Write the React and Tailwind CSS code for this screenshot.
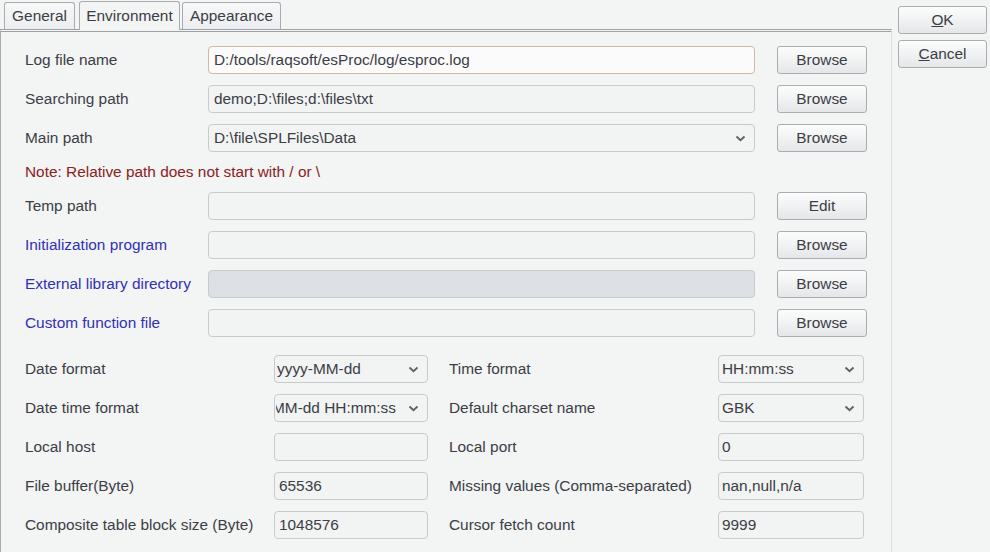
import React from 'react';

const font = { fontFamily: '"Liberation Sans", Arial, sans-serif' };

const Chevron = () => (
  <svg width="11" height="7" viewBox="0 0 11 7" className="shrink-0">
    <path d="M1.5 1.5 L5.5 5.2 L9.5 1.5" fill="none" stroke="#5c6068" strokeWidth="1.8" />
  </svg>
);

const Button = ({ children, className = '' }) => (
  <div className={`h-[28px] border border-[#a9adb2] rounded-[3px] bg-linear-to-b from-[#fcfcfc] via-[#f1f2f3] to-[#e4e6e8] flex items-center justify-center text-[15.4px] text-[#3b3e46] ${className}`}>
    {children}
  </div>
);

const Field = ({ value, width, select, tone = 'plain', pad = 'pl-[5px]', clipLeft }) => {
  const tones = {
    plain: 'bg-[#f2f3f3] border-[#c8cbce]',
    focus: 'bg-[#fbfbfb] border-[#d6b7a6]',
    dim: 'bg-[#dde0e4] border-[#c8cbce]',
  };
  return (
    <div className={`${width} h-[28px] border rounded-[4px] flex items-center ${pad} pr-[8px] text-[15.4px] text-[#3b3e46] ${tones[tone]}`}>
      <div className={`flex-1 overflow-hidden whitespace-nowrap flex ${select ? 'mr-[12px]' : ''} ${clipLeft ? 'justify-end' : ''}`}>
        <span className="shrink-0">{value}</span>
      </div>
      {select && <Chevron />}
    </div>
  );
};

const Row = ({ label, blue, children }) => (
  <div className="flex items-center h-[28px]">
    <div className={`w-[183px] text-[15.4px] whitespace-nowrap ${blue ? 'text-[#3131b4]' : 'text-[#3b3e46]'}`}>{label}</div>
    {children}
  </div>
);

const PairRow = ({ left, right }) => (
  <div className="flex items-center h-[28px]">
    <div className="w-[249px] text-[15.4px] whitespace-nowrap text-[#3b3e46]">{left.label}</div>
    {left.field}
    <div className="w-[21px]" />
    <div className="w-[269px] text-[15.4px] whitespace-nowrap text-[#3b3e46]">{right.label}</div>
    {right.field}
  </div>
);

const Tab = ({ children, active, className = '' }) => (
  <div
    className={`border border-[#a9adb2] border-b-0 rounded-t-[3px] flex items-center justify-center text-[15.4px] text-[#3b3e46] ${
      active ? 'h-[29px] bg-[#f3f4f4] relative top-[1px]' : 'h-[27px] bg-linear-to-b from-[#f7f8f8] to-[#eceef0]'
    } ${className}`}
  >
    {children}
  </div>
);

export default function App() {
  return (
    <div style={font} className="w-[990px] h-[552px] bg-[#f3f4f4] flex overflow-hidden">
      <div className="w-[892px] flex flex-col">
        <div className="flex items-end pl-[4px] pt-[2px] h-[29px] gap-[4px]">
          <Tab className="w-[71px]">General</Tab>
          <Tab active className="w-[101px]">Environment</Tab>
          <Tab className="w-[99px] -ml-[2px]">Appearance</Tab>
        </div>
        <div className="flex-1 border-t-[3px] border-double border-t-[#9da1a6] border-l border-l-[#a9adb2] border-r border-r-[#dcdfe1] pl-[24px] pt-[14px] flex flex-col">
          <div className="flex flex-col gap-[11px]">
            <Row label="Log file name">
              <Field width="w-[547px]" tone="focus" value="D:/tools/raqsoft/esProc/log/esproc.log" />
              <Button className="w-[90px] ml-[22px]">Browse</Button>
            </Row>
            <Row label="Searching path">
              <Field width="w-[547px]" value="demo;D:\files;d:\files\txt" />
              <Button className="w-[90px] ml-[22px]">Browse</Button>
            </Row>
            <Row label="Main path">
              <Field width="w-[547px]" select value="D:\file\SPLFiles\Data" />
              <Button className="w-[90px] ml-[22px]">Browse</Button>
            </Row>
            <div className="h-[18px] flex items-center text-[15.4px] text-[#8a2222]">
              Note: Relative path does not start with / or \
            </div>
            <Row label="Temp path">
              <Field width="w-[547px]" value="" />
              <Button className="w-[90px] ml-[22px]">Edit</Button>
            </Row>
            <Row label="Initialization program" blue>
              <Field width="w-[547px]" value="" />
              <Button className="w-[90px] ml-[22px]">Browse</Button>
            </Row>
            <Row label="External library directory" blue>
              <Field width="w-[547px]" tone="dim" value="" />
              <Button className="w-[90px] ml-[22px]">Browse</Button>
            </Row>
            <Row label="Custom function file" blue>
              <Field width="w-[547px]" value="" />
              <Button className="w-[90px] ml-[22px]">Browse</Button>
            </Row>
          </div>
          <div className="flex flex-col gap-[11px] mt-[18px]">
            <PairRow
              left={{ label: 'Date format', field: <Field width="w-[154px]" pad="pl-[2px]" select value="yyyy-MM-dd" /> }}
              right={{ label: 'Time format', field: <Field width="w-[146px]" pad="pl-[3px]" select value="HH:mm:ss" /> }}
            />
            <PairRow
              left={{ label: 'Date time format', field: <Field width="w-[154px]" pad="pl-[1px]" select clipLeft value="yyyy-MM-dd HH:mm:ss" /> }}
              right={{ label: 'Default charset name', field: <Field width="w-[146px]" pad="pl-[3px]" select value="GBK" /> }}
            />
            <PairRow
              left={{ label: 'Local host', field: <Field width="w-[154px]" value="" /> }}
              right={{ label: 'Local port', field: <Field width="w-[146px]" pad="pl-[3px]" value="0" /> }}
            />
            <PairRow
              left={{ label: 'File buffer(Byte)', field: <Field width="w-[154px]" pad="pl-[4px]" value="65536" /> }}
              right={{ label: 'Missing values (Comma-separated)', field: <Field width="w-[146px]" pad="pl-[3px]" value="nan,null,n/a" /> }}
            />
            <PairRow
              left={{ label: 'Composite table block size (Byte)', field: <Field width="w-[154px]" pad="pl-[4px]" value="1048576" /> }}
              right={{ label: 'Cursor fetch count', field: <Field width="w-[146px]" pad="pl-[3px]" value="9999" /> }}
            />
          </div>
        </div>
      </div>
      <div className="flex flex-col pl-[6px] pt-[6px] gap-[6px]">
        <Button className="w-[89px] h-[28px]">
          <span><span className="underline">O</span>K</span>
        </Button>
        <Button className="w-[89px] h-[28px]">
          <span><span className="underline">C</span>ancel</span>
        </Button>
      </div>
    </div>
  );
}
